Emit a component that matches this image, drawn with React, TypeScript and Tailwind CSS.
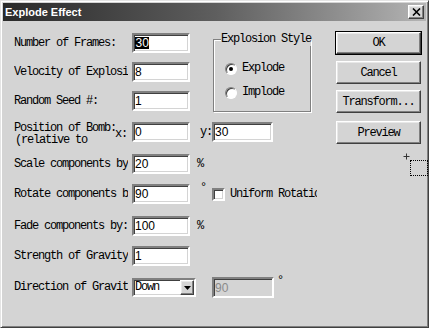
import React from "react";

const sunken =
  "border-2 border-t-[#808080] border-l-[#808080] border-r-white border-b-white shadow-[inset_1px_1px_0_#404040,inset_-1px_-1px_0_#d4d4d4]";
const raised =
  "border border-t-white border-l-white border-r-[#404040] border-b-[#404040] shadow-[inset_-1px_-1px_0_#808080,inset_1px_1px_0_#e8e8e8]";

function Label({ text }: { text: string }) {
  return (
    <div className="w-[118px] shrink-0">
      <div className="w-[114px] overflow-hidden whitespace-nowrap leading-[13px]">{text}</div>
    </div>
  );
}

function Field({ value, w = "w-[58px]", selected = false }: { value: string; w?: string; selected?: boolean }) {
  return (
    <div className={`${w} h-[20px] shrink-0 bg-white ${sunken} flex items-center pl-[1px] font-['Liberation_Sans',Arial,sans-serif] text-[12px] tracking-normal text-black`}>
      {selected ? <span className="bg-black text-white leading-[12px] px-[0.5px]">{value}</span> : <span className="leading-[12px]">{value}</span>}
    </div>
  );
}

function Row({ label, value, extra, mt, selected }: { label: string; value: string; extra?: React.ReactNode; mt: string; selected?: boolean }) {
  return (
    <div className={`flex items-center h-[20px] ${mt}`}>
      <Label text={label} />
      <Field value={value} selected={selected} />
      {extra}
    </div>
  );
}

function Button({ text, mt, isDefault }: { text: string; mt: string; isDefault?: boolean }) {
  if (isDefault) {
    return (
      <div className={`${mt} w-[87px] border border-black`}>
        <div className={`h-[22px] ${raised} flex items-center justify-center`}>{text}</div>
      </div>
    );
  }
  return <div className={`${mt} mx-[1px] w-[85px] h-[23px] ${raised} flex items-center justify-center`}>{text}</div>;
}

function Radio({ checked, label, mt }: { checked?: boolean; label: string; mt: string }) {
  return (
    <div className={`flex items-center ${mt}`}>
      <div className="w-[12px] h-[12px] rounded-full border border-t-[#808080] border-l-[#808080] border-r-white border-b-white bg-white shadow-[inset_1px_1px_0_#404040] flex items-center justify-center">
        {checked && <div className="w-[4px] h-[4px] rounded-full bg-black" />}
      </div>
      <span className="ml-[5px] leading-[13px]">{label}</span>
    </div>
  );
}

export default function App() {
  return (
    <div className="w-[429px] h-[328px] relative overflow-hidden bg-[#d4d4d4] border border-t-[#e4e4e4] border-l-[#e4e4e4] border-r-[#404040] border-b-[#404040] shadow-[inset_1px_1px_0_#ffffff,inset_-1px_-1px_0_#808080] p-[2px] flex flex-col font-['Liberation_Mono',monospace] text-[12px] tracking-[-1.2px] text-black">
      {/* Title bar */}
      <div className="h-[18px] shrink-0 flex items-center justify-between pl-[2px] pr-[2px] bg-gradient-to-r from-[#2a2a2a] via-[#5e5e5e] to-[#b4b4b4]">
        <span className="font-['Liberation_Sans',Arial,sans-serif] font-bold text-[11px] tracking-normal text-white leading-[14px]">Explode Effect</span>
        <div className={`w-[16px] h-[14px] bg-[#d4d4d4] ${raised} flex items-center justify-center`}>
          <svg width="9" height="8" viewBox="0 0 9 8">
            <path d="M1 0.5 L8 7.5 M8 0.5 L1 7.5" stroke="black" strokeWidth="1.6" />
          </svg>
        </div>
      </div>

      {/* Body */}
      <div className="flex flex-1 pl-[11px]">
        {/* Column A */}
        <div className="flex flex-col">
          <div className="flex items-start">
            <div className="flex flex-col pt-[12px]">
              <Row label="Number of Frames:" value="30" mt="" selected />
              <Row label="Velocity of Explosion:" value="8" mt="mt-[9px]" />
              <Row label="Random Seed #:" value="1" mt="mt-[9px]" />
            </div>
            {/* Group box */}
            <div className="relative ml-[23px] mt-[18px] w-[98px] h-[73px] border border-[#808080] shadow-[1px_1px_0_#ffffff,inset_1px_1px_0_#ffffff] pl-[11px] pt-[22px]">
              <span className="absolute left-[7px] top-[-7px] bg-[#d4d4d4] leading-[13px] whitespace-nowrap">Explosion Style</span>
              <Radio checked label="Explode" mt="" />
              <Radio label="Implode" mt="mt-[11px]" />
            </div>
          </div>

          {/* Position row */}
          <div className="flex items-center h-[20px] mt-[10px]">
            <div className="w-[101px] shrink-0 self-start whitespace-nowrap leading-[12px]">
              <div>Position of Bomb:</div>
              <div className="pl-[1px]">(relative to</div>
            </div>
            <span className="w-[17px] shrink-0 leading-[12px] mt-[3px]">x:</span>
            <Field value="0" />
            <span className="ml-[10px] w-[12px] shrink-0 leading-[12px]">y:</span>
            <Field value="30" w="w-[61px]" />
          </div>

          <Row label="Scale components by:" value="20" mt="mt-[12px]" extra={<span className="ml-[7px] leading-[12px]">%</span>} />
          <Row
            label="Rotate components by:"
            value="90"
            mt="mt-[10px]"
            extra={
              <>
                <span className="ml-[10px] w-[6px] self-start leading-[10px] -mt-[1px]">°</span>
                <div className={`ml-[6px] w-[13px] h-[13px] bg-white ${sunken}`} />
                <div className="ml-[5px] w-[87px] overflow-hidden whitespace-nowrap leading-[13px]">Uniform Rotation</div>
              </>
            }
          />
          <Row label="Fade components by:" value="100" mt="mt-[12px]" extra={<span className="ml-[7px] leading-[12px]">%</span>} />
          <Row label="Strength of Gravity:" value="1" mt="mt-[10px]" />

          {/* Direction row */}
          <div className="flex items-center h-[21px] mt-[11px]">
            <Label text="Direction of Gravity:" />
            <div className={`w-[64px] h-[19px] shrink-0 bg-white ${sunken} flex items-center justify-between`}>
              <span className="pl-[1px] leading-[13px]">Down</span>
              <div className={`w-[14px] h-full bg-[#d4d4d4] ${raised} flex items-center justify-center`}>
                <svg width="7" height="4" viewBox="0 0 7 4">
                  <path d="M0 0 H7 L3.5 4 Z" fill="black" />
                </svg>
              </div>
            </div>
            <div className="ml-[16px] w-[62px] h-[21px] shrink-0 border-2 border-t-[#808080] border-l-[#808080] border-r-white border-b-white shadow-[inset_1px_1px_0_#404040] flex items-center pl-[1px] font-['Liberation_Sans',Arial,sans-serif] text-[12px] tracking-normal text-[#8a8a8a]">
              90
            </div>
            <span className="ml-[3px] self-start leading-[10px] -mt-[1px]">°</span>
          </div>
        </div>

        {/* Column B: buttons */}
        <div className="flex flex-col pt-[10px] ml-[18px]">
          <Button text="OK" mt="" isDefault />
          <Button text="Cancel" mt="mt-[6px]" />
          <Button text="Transform..." mt="mt-[6px]" />
          <Button text="Preview" mt="mt-[8px]" />
        </div>
      </div>

      {/* Marker (overlay) */}
      <svg className="absolute left-[402px] top-[152px]" width="7" height="7" viewBox="0 0 7 7">
        <path d="M3.5 0.5 V6.5 M0.5 3.5 H6.5" stroke="#333" strokeWidth="1" />
      </svg>
      <div className="absolute left-[409px] top-[159px] w-[18px] h-[16px] border border-dotted border-black" />
    </div>
  );
}
